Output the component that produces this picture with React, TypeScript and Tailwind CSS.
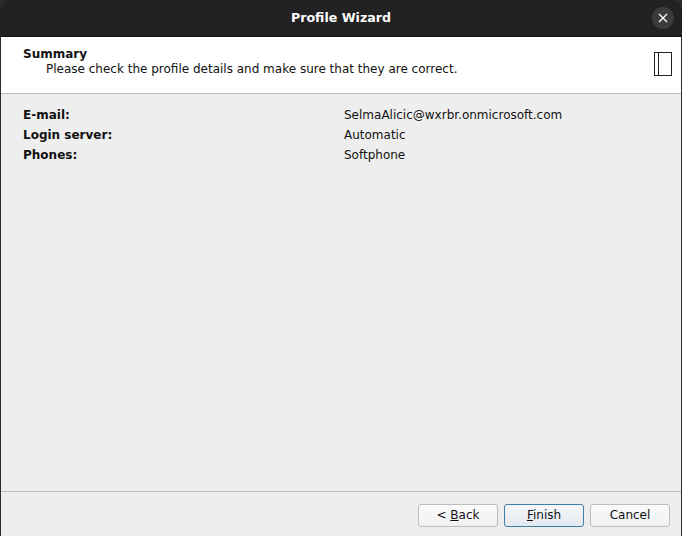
import React from "react";

function Btn({ children, primary }: { children: React.ReactNode; primary?: boolean }) {
  return (
    <button
      className={
        primary
          ? "h-[23px] w-[80px] rounded-[3px] border border-[#3d7ea8] bg-gradient-to-b from-[#f6f8fa] to-[#e2e8ee] pb-[2px] text-[12px] leading-none text-[#111]"
          : "h-[23px] w-[80px] rounded-[3px] border border-[#bdbdbd] bg-gradient-to-b from-[#fafafa] to-[#f1f1f1] pb-[2px] text-[12px] leading-none text-[#111]"
      }
    >
      {children}
    </button>
  );
}

export default function App() {
  return (
    <div className="flex h-[536px] w-[682px] flex-col overflow-hidden bg-[#2c2c2c] font-['DejaVu_Sans',sans-serif] text-[12px] text-[#111]">
      <div className="relative flex h-[37px] shrink-0 items-center justify-center rounded-t-[10px] border-b border-[#111] bg-[#222222]">
        <span className="text-[12.6px] font-bold text-white">Profile Wizard</span>
        <div className="absolute right-[8px] top-[7px] flex h-[22px] w-[22px] items-center justify-center rounded-full bg-[#3c3c3c]">
          <svg width="10" height="10" viewBox="0 0 10 10" fill="none" stroke="#ffffff" strokeWidth="1.3">
            <path d="M1 1L9 9M9 1L1 9" />
          </svg>
        </div>
      </div>
      <div className="flex min-h-0 flex-1 flex-col pl-px pr-px">
        <div className="flex h-[57px] shrink-0 items-start justify-between border-b border-[#bcbcbc] bg-white pl-[22px] pr-[9px]">
          <div className="pt-[10px] leading-[15px]">
            <div className="font-bold">Summary</div>
            <div className="pl-[23px]">Please check the profile details and make sure that they are correct.</div>
          </div>
          <svg className="mt-[15px]" width="18" height="24" viewBox="0 0 18 24" fill="none">
            <rect x="0.5" y="0.5" width="17" height="23" stroke="#222" />
            <path d="M4.5 0.5V23.5" stroke="#222" />
          </svg>
        </div>
        <div className="flex min-h-0 flex-1 flex-col bg-[#eeeeee] pl-[22px] pt-[11px]">
          <div className="grid grid-cols-[321px_1fr] auto-rows-[20px] items-center">
            <div className="font-bold">E-mail:</div>
            <div>SelmaAlicic@wxrbr.onmicrosoft.com</div>
            <div className="font-bold">Login server:</div>
            <div>Automatic</div>
            <div className="font-bold">Phones:</div>
            <div>Softphone</div>
          </div>
        </div>
        <div className="flex h-[45px] shrink-0 items-start justify-end gap-[6px] border-t border-[#bcbcbc] bg-[#eeeeee] pr-[11px] pt-[12px]">
          <Btn>
            &lt; <span className="underline">B</span>ack
          </Btn>
          <Btn primary>
            <span className="underline">F</span>inish
          </Btn>
          <Btn>Cancel</Btn>
        </div>
      </div>
    </div>
  );
}
